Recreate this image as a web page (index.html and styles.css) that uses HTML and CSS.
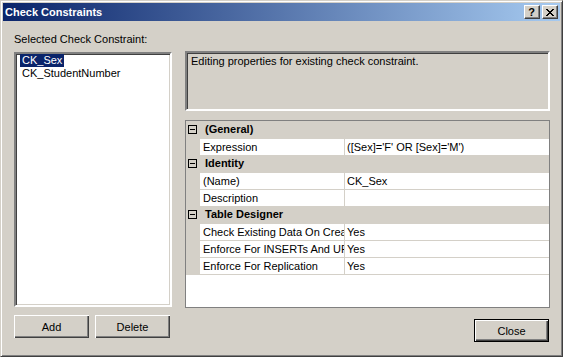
FILE: index.html
```html
<!DOCTYPE html>
<html>
<head>
<meta charset="utf-8">
<link rel="stylesheet" href="styles.css">
</head>
<body>
<div class="window">
  <div class="titlebar">
    <span class="title">Check Constraints</span>
    <div class="tbtns">
      <span class="tbtn help">?</span>
      <span class="tbtn">
        <svg class="xglyph" width="8" height="7" viewBox="0 0 8 7" shape-rendering="crispEdges"><path fill="#000" d="M0 0h2v1H0zM6 0h2v1H6zM1 1h2v1H1zM5 1h2v1H5zM2 2h4v1H2zM3 3h2v1H3zM2 4h4v1H2zM1 5h2v1H1zM5 5h2v1H5zM0 6h2v1H0zM6 6h2v1H6z"/></svg>
      </span>
    </div>
  </div>
  <div class="body">
    <div class="leftcol">
      <div class="label">Selected Check Constraint:</div>
      <div class="listbox">
        <div class="item sel">CK_Sex</div>
        <div class="item">CK_StudentNumber</div>
      </div>
      <div class="btnrow">
        <button class="btn">Add</button>
        <button class="btn">Delete</button>
      </div>
    </div>
    <div class="rightcol">
      <div class="desc">Editing properties for existing check constraint.</div>
      <div class="grid">
        <div class="row cat">
          <svg class="minus" width="9" height="9" viewBox="0 0 9 9" shape-rendering="crispEdges"><rect x="0.5" y="0.5" width="8" height="8" fill="none" stroke="#000"/><path d="M2 4h5v1H2z" fill="#000"/></svg>
          <span class="cattext">(General)</span>
        </div>
        <div class="row prop">
          <div class="pname">Expression</div>
          <div class="pval">([Sex]='F' OR [Sex]='M')</div>
        </div>
        <div class="row cat">
          <svg class="minus" width="9" height="9" viewBox="0 0 9 9" shape-rendering="crispEdges"><rect x="0.5" y="0.5" width="8" height="8" fill="none" stroke="#000"/><path d="M2 4h5v1H2z" fill="#000"/></svg>
          <span class="cattext">Identity</span>
        </div>
        <div class="row prop">
          <div class="pname">(Name)</div>
          <div class="pval">CK_Sex</div>
        </div>
        <div class="row prop">
          <div class="pname">Description</div>
          <div class="pval"></div>
        </div>
        <div class="row cat">
          <svg class="minus" width="9" height="9" viewBox="0 0 9 9" shape-rendering="crispEdges"><rect x="0.5" y="0.5" width="8" height="8" fill="none" stroke="#000"/><path d="M2 4h5v1H2z" fill="#000"/></svg>
          <span class="cattext">Table Designer</span>
        </div>
        <div class="row prop">
          <div class="pname">Check Existing Data On Creation Or Re-Enabling</div>
          <div class="pval">Yes</div>
        </div>
        <div class="row prop">
          <div class="pname">Enforce For INSERTs And UPDATEs</div>
          <div class="pval">Yes</div>
        </div>
        <div class="row prop last">
          <div class="pname">Enforce For Replication</div>
          <div class="pval">Yes</div>
        </div>
      </div>
      <div class="closerow">
        <button class="btn default">Close</button>
      </div>
    </div>
  </div>
</div>
</body>
</html>
```

FILE: styles.css
```css
html, body {
  margin: 0;
  padding: 0;
  background: #d4d0c8;
}

body {
  font-family: "Liberation Sans", Arial, sans-serif;
  font-size: 11px;
  line-height: 13px;
  color: #000;
}

.window {
  width: 563px;
  height: 357px;
  box-sizing: border-box;
  border: 1px solid;
  border-color: #d4d0c8 #404040 #404040 #d4d0c8;
  box-shadow: inset 1px 1px #fff, inset -1px -1px #808080;
  padding: 2px;
  background: #d4d0c8;
}

.titlebar {
  height: 18px;
  display: flex;
  align-items: center;
  justify-content: space-between;
  padding: 0 2px;
  background: linear-gradient(to right, #0a246a, #a6caf0);
}

.title {
  color: #fff;
  font-weight: bold;
  font-size: 11px;
}

.tbtns {
  display: flex;
  gap: 2px;
}

.tbtn {
  width: 16px;
  height: 14px;
  box-sizing: border-box;
  background: #d4d0c8;
  border: 1px solid;
  border-color: #fff #404040 #404040 #fff;
  box-shadow: inset -1px -1px #808080;
  display: flex;
  align-items: center;
  justify-content: center;
}

.help {
  font-weight: bold;
  font-size: 11px;
  line-height: 12px;
  padding-right: 1px;
}

.xglyph {
  display: block;
  margin-right: 1px;
}

.body {
  display: flex;
  gap: 13px;
  padding: 12px 10px 0 11px;
}

.leftcol {
  width: 158px;
  display: flex;
  flex-direction: column;
}

.label {
  height: 13px;
}

.listbox {
  margin-top: 6px;
  height: 255px;
  box-sizing: border-box;
  background: #fff;
  border: 2px solid;
  border-color: #808080 #fff #fff #808080;
  box-shadow: inset 1px 1px #404040, inset -1px -1px #d4d0c8;
  padding: 0 0 0 4px;
}

.item {
  width: fit-content;
  height: 13px;
  padding: 0 2px;
  white-space: nowrap;
}

.item.sel {
  background: #0a246a;
  color: #fff;
}

.btnrow {
  display: flex;
  gap: 6px;
  margin-top: 8px;
}

.btn {
  width: 75px;
  height: 23px;
  box-sizing: border-box;
  margin: 0;
  padding: 0;
  background: #d4d0c8;
  border: none;
  box-shadow: inset 1px 1px #fff, inset -1px -1px #404040, inset -2px -2px #808080;
  font-family: "Liberation Sans", Arial, sans-serif;
  font-size: 11px;
  color: #000;
}

.btn.default {
  border: 1px solid #000;
}

.rightcol {
  width: 365px;
  padding-top: 18px;
  display: flex;
  flex-direction: column;
}

.desc {
  height: 60px;
  box-sizing: border-box;
  border: 2px solid;
  border-color: #808080 #fff #fff #808080;
  box-shadow: inset 1px 1px #404040, inset -1px -1px #d4d0c8;
  padding: 2px 4px;
}

.grid {
  margin-top: 9px;
  height: 188px;
  box-sizing: border-box;
  border: 1px solid #808080;
  background: #fff;
}

.row {
  height: 17px;
  display: flex;
  background: #d4d0c8;
}

.row.cat {
  align-items: flex-start;
  padding-left: 2px;
}

.minus {
  display: block;
  margin-top: 4px;
}

.cattext {
  font-weight: bold;
  margin-left: 8px;
  line-height: 17px;
}

.row.prop {
  padding-left: 14px;
  gap: 1px;
}

.row.last {
  height: 18px;
}

.pname,
.pval {
  margin-top: 1px;
  height: 16px;
  line-height: 16px;
  background: #fff;
  white-space: nowrap;
  overflow: hidden;
}

.pname {
  width: 141px;
  padding-left: 3px;
  flex: none;
}

.pval {
  flex: 1;
  padding-left: 2px;
}

.row.last .pname,
.row.last .pval {
  margin-bottom: 1px;
}

.closerow {
  display: flex;
  justify-content: flex-end;
  margin-top: 11px;
  padding-right: 1px;
}
```
